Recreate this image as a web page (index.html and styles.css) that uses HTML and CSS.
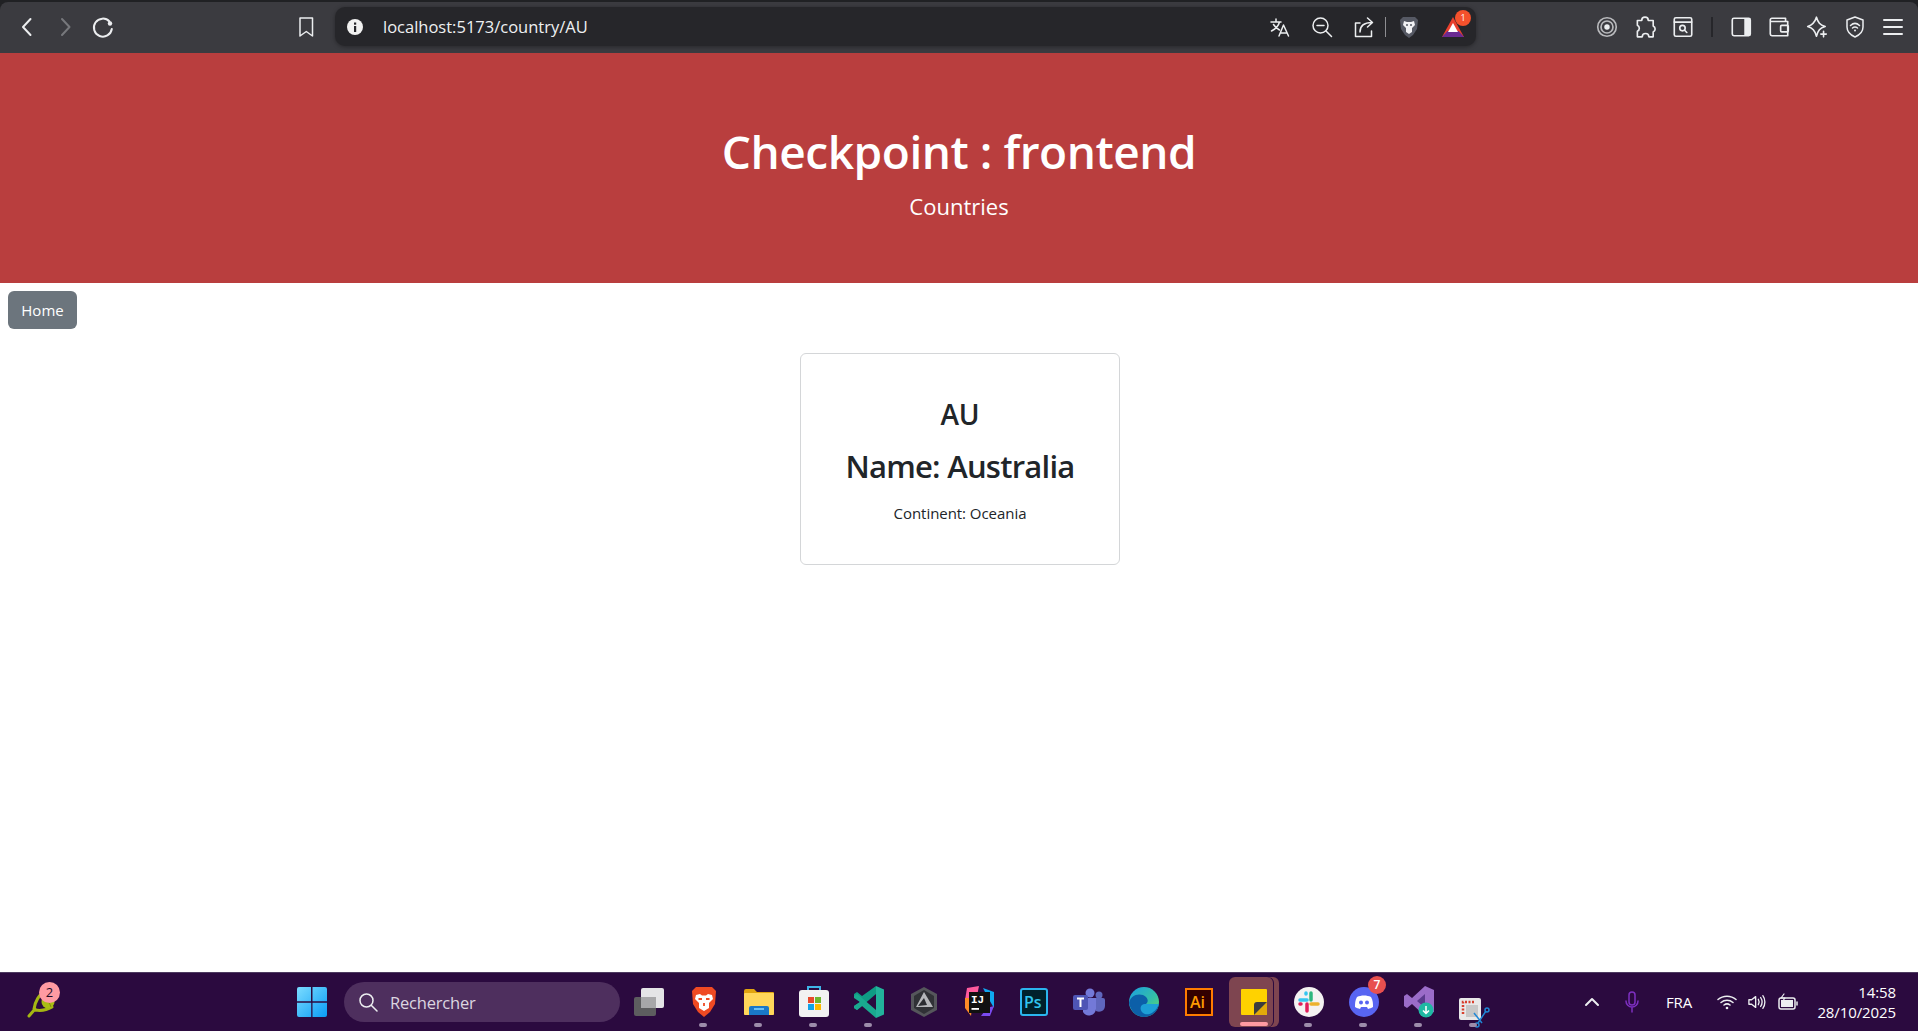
FILE: index.html
```html
<!DOCTYPE html>
<html lang="fr">
<head>
<meta charset="utf-8">
<title>Checkpoint : frontend</title>
<link rel="stylesheet" href="styles.css">
</head>
<body>
<div class="chrome">
  <div class="toolbar">
    <span class="tool"><svg width="24" height="24" viewBox="0 0 24 24" class="line"><path d="M15.500 4 8 12l7.500 8"/></svg></span>
    <span class="tool"><svg width="24" height="24" viewBox="0 0 24 24" class="line dim"><path d="M9 4l7.500 8L9 20"/></svg></span>
    <span class="tool"><svg width="24" height="24" viewBox="0 0 24 24" class="line"><path d="M18.500 6.500A9 9 0 1 0 20.800 14"/><circle cx="19" cy="8.500" r="2.200" class="fill"/></svg></span>
    <span class="tool bookmark"><svg width="20" height="24" viewBox="0 0 20 24" class="line thin"><path d="M4 3h12.500v18l-6.200-4.500L4 21z"/></svg></span>
    <div class="urlbar">
      <svg class="info" width="18" height="18" viewBox="0 0 18 18"><circle cx="9" cy="9" r="8" fill="#f1f1f1"/><rect x="8" y="8" width="2.200" height="6" fill="#26262a"/><rect x="8" y="4.500" width="2.200" height="2.200" fill="#26262a"/></svg>
      <span class="url">localhost:5173/country/AU</span>
      <div class="url-tools">
        <span class="url-tool"><svg width="22" height="22" viewBox="0 0 22 22" class="line thin"><path d="M2 6h10M7 3v3M10.500 6c-1 4-4 7-8 9M4.500 8.500c1.500 2.500 3 4 6 5.500M10 20l4.500-11L19.500 20M11.500 17h6.500"/></svg></span>
        <span class="url-tool"><svg width="22" height="22" viewBox="0 0 22 22" class="line thin"><circle cx="9.500" cy="9.500" r="7.500"/><path d="M6 9.500h7M15 15l5.500 5.500"/></svg></span>
        <span class="url-tool"><svg width="22" height="22" viewBox="0 0 22 22" class="line thin"><path d="M7 7H2.500v13.500h16V15M7 16c0-6 4-9.500 12-9.500M14.500 2l5 4.500-5 4.500"/></svg></span>
        <span class="url-divider"></span>
        <span class="url-tool brave-tool"><svg width="20" height="24" viewBox="0 0 20 24"><path d="M4 2h12l3 3-1 9-4 6-4 3-4-3-4-6-1-9z" fill="#565964"/><path d="M5 6l3 1h4l3-1 1 4-3 3v4l-3 2-3-2v-4l-3-3z" fill="#f1f1f4"/><path d="M7 10h2M11 10h2" stroke="#565964" stroke-width="1.500"/></svg></span>
        <span class="url-tool bat-tool"><svg width="24" height="22" viewBox="0 0 24 22"><polygon points="12,1 23,21 1,21" fill="#e8402d"/><polygon points="1,21 23,21 17.500,15 6.500,15" fill="#6a2a92"/><polygon points="12,7 17,16 7,16" fill="#fff"/></svg><span class="bat-badge">1</span></span>
      </div>
    </div>
    <div class="browser-tools">
      <span class="tool"><svg width="24" height="24" viewBox="0 0 22 22" class="line thin soft"><circle cx="11" cy="11" r="8.500"/><circle cx="11" cy="11" r="5.500"/><circle cx="11" cy="11" r="2.500" class="fill"/></svg></span>
      <span class="tool"><svg width="24" height="24" viewBox="0 0 22 22" class="line thin"><path d="M8 5a3 3 0 0 1 6 0h4.500v5a3 3 0 0 1 0 5.500V20h-4a3 3 0 0 0-6 0H4v-5a3 3 0 0 0 0-5.500V5z"/></svg></span>
      <span class="tool"><svg width="24" height="24" viewBox="0 0 22 22" class="line thin"><rect x="3" y="2.500" width="16" height="17" rx="1.500"/><path d="M3 6.500h16"/><circle cx="10.500" cy="12" r="2.500"/><path d="M12.500 14l2 2"/></svg></span>
      <span class="tool-divider"></span>
      <span class="tool"><svg width="24" height="24" viewBox="0 0 22 22" class="line thin"><rect x="3" y="3" width="16.500" height="16" rx="1.500"/><rect x="14" y="3" width="5.500" height="16" class="fill"/></svg></span>
      <span class="tool"><svg width="24" height="24" viewBox="0 0 22 22" class="line thin"><path d="M17 6V3H4.500A1.500 1.500 0 0 0 3 4.500v13A1.500 1.500 0 0 0 4.500 19H19V6H4"/><rect x="12.500" y="9.500" width="7" height="6" rx="1"/></svg></span>
      <span class="tool"><svg width="24" height="24" viewBox="0 0 22 22" class="line thin"><path d="M10.500 2c1.500 5 3 7 8 8.500-5 1.500-6.500 3.500-8 9-1.500-5.500-3.500-7.500-8-9 4.500-1.500 6.500-3.500 8-8.500z"/><path d="M17 15v5M14.500 17.500h5"/></svg></span>
      <span class="tool"><svg width="22" height="24" viewBox="0 0 22 24" class="line thin"><path d="M11 2l8 3v7c0 5-3.500 8-8 10-4.500-2-8-5-8-10V5z"/><path d="M6.500 10.500c2.800-2.600 6.200-2.600 9 0M8.500 13c1.600-1.300 3.400-1.300 5 0"/><circle cx="11" cy="15.500" r="1" class="fill"/></svg></span>
      <span class="tool"><svg width="22" height="22" viewBox="0 0 22 22" class="line"><path d="M2 4h18M2 11h18M2 18h18"/></svg></span>
    </div>
  </div>
</div>

<main class="page">
  <header class="hero">
    <h1 class="hero-title">Checkpoint : frontend</h1>
    <p class="hero-sub">Countries</p>
  </header>
  <nav class="page-nav"><a class="btn-home" href="#">Home</a></nav>
  <section class="card">
    <h5 class="card-code">AU</h5>
    <h3 class="card-name">Name: Australia</h3>
    <p class="card-continent">Continent: Oceania</p>
  </section>
</main>

<footer class="taskbar">
  <span class="widget">
    <svg width="34" height="38" viewBox="0 0 34 38"><path d="M19 9c-6 2-10 10-11 17M26 24c-5 3-11 4-17 3M3 33l6-7" fill="none" stroke="#a5b712" stroke-width="3" stroke-linecap="round"/><circle cx="22" cy="19" r="6.500" fill="#a9bd14"/><path d="M18 15c3 2 6 5 7 9" stroke="#7f8f0c" stroke-width="1" fill="none"/></svg>
    <span class="widget-badge">2</span>
  </span>
  <span class="start"><svg width="30" height="30" viewBox="0 0 30 30"><defs><linearGradient id="win" x1="0" y1="0" x2="1" y2="1"><stop offset="0" stop-color="#7bdcff"/><stop offset="1" stop-color="#0a9cf5"/></linearGradient></defs><path d="M0 2a2 2 0 0 1 2-2h12v14.200H0zM15.500 0H28a2 2 0 0 1 2 2v12.200H15.500zM0 15.700h14.200V30H2a2 2 0 0 1-2-2zM15.500 15.700H30V28a2 2 0 0 1-2 2H15.500z" fill="url(#win)"/></svg></span>
  <div class="search">
    <svg width="20" height="20" viewBox="0 0 20 20" class="line thin"><circle cx="8.500" cy="8.500" r="6.500"/><path d="M13.500 13.500L19 19"/></svg>
    <span>Rechercher</span>
  </div>
  <div class="apps">
    <span class="app"><svg width="32" height="30" viewBox="0 0 32 30"><rect x="1" y="10" width="22" height="19" rx="2" fill="#5d5d5f"/><rect x="8" y="1" width="23" height="20" rx="2" fill="#e4e4e6"/><rect x="8" y="10" width="15" height="11" fill="#a7a7a9"/></svg></span>
    <span class="app on"><svg width="26" height="32" viewBox="0 0 26 32"><path d="M5 1h16l4 4-1 13-5 8-6 5-6-5-5-8L1 5z" fill="#ef4a23"/><path d="M5 9l4-1 2 1.500h4L17 8l4 1 1 4-4 4v5l-5 3-5-3v-5l-4-4z" fill="#fff"/><path d="M7.500 13h3.500M15 13h3.500M13 17v3" stroke="#ef4a23" stroke-width="1.800"/></svg></span>
    <span class="app on"><svg width="32" height="28" viewBox="0 0 32 28"><path d="M1 3a2 2 0 0 1 2-2h8l3 3h16a1 1 0 0 1 1 1v20a2 2 0 0 1-2 2H3a2 2 0 0 1-2-2z" fill="#e0a40f"/><rect x="1" y="5" width="30" height="22" rx="1" fill="#ffd65a"/><path d="M6 27v-7a2 2 0 0 1 2-2h16a2 2 0 0 1 2 2v7z" fill="#1a78c8"/><rect x="11" y="20" width="10" height="2" fill="#6bc0f5"/></svg></span>
    <span class="app on"><svg width="30" height="32" viewBox="0 0 30 32"><path d="M8 0h14v4h-2V2H10v2H8z" fill="#3fb5e8"/><rect y="4" width="30" height="27" rx="3" fill="#f2f2f2"/><rect x="9" y="11" width="6" height="6" fill="#e8492c"/><rect x="16" y="11" width="6" height="6" fill="#6fb52e"/><rect x="9" y="18" width="6" height="6" fill="#12a3e8"/><rect x="16" y="18" width="6" height="6" fill="#fdb900"/></svg></span>
    <span class="app on"><svg width="32" height="32" viewBox="0 0 32 32"><path d="M23 0l8 3.500v25L23 32z" fill="#22b39b"/><path d="M23 0v8L9 20l-5 4-3-2v-2l6-4-6-6V8l3-2 5 4z" fill="#0f9c84"/><path d="M23 32v-8L9 12 4 8 1 10v2l6 4-6 4v2l3 2 5-4z" fill="#1aa98f"/></svg></span>
    <span class="app"><svg width="28" height="30" viewBox="0 0 28 30"><polygon points="14,0 27,7 27,23 14,30 1,23 1,7" fill="#55565b"/><polygon points="14,3 24,9 24,21 14,27 4,21 4,9" fill="#303136"/><polygon points="14,5 23,20 6,20" fill="#b5b6ba"/><polygon points="14,11 17,18 8,19" fill="#2b2c31"/></svg></span>
    <span class="app"><svg width="32" height="32" viewBox="0 0 32 32"><polygon points="4,2 16,0 14,10 2,14" fill="#ff5a9d"/><polygon points="20,2 31,6 31,22 24,10" fill="#10a8f0"/><polygon points="2,12 10,12 8,30 2,22" fill="#fd8b26"/><polygon points="24,22 31,20 27,30 18,30" fill="#7a4bf0"/><rect x="6" y="6" width="21" height="21" fill="#111"/><text x="8" y="17" class="ij">IJ</text><rect x="8.500" y="22" width="7.500" height="1.800" fill="#fff"/></svg></span>
    <span class="app"><svg width="28" height="28" viewBox="0 0 28 28"><rect x="1" y="1" width="26" height="26" rx="2" fill="#00212c" stroke="#2bb5ee" stroke-width="2"/><text x="4" y="20" class="ps">Ps</text></svg></span>
    <span class="app"><svg width="32" height="28" viewBox="0 0 32 28"><circle cx="17" cy="5" r="4.500" fill="#7379d8"/><circle cx="26" cy="7" r="3.500" fill="#5f66bd"/><path d="M21 10h9a2 2 0 0 1 2 2v6a6 6 0 0 1-9 5z" fill="#5f66bd"/><path d="M10 10h13v11a7 7 0 0 1-13 3z" fill="#7379d8"/><rect y="7" width="15" height="15" rx="2" fill="#4e55b5"/><path d="M4 10.500h7M7.500 10.500V19" stroke="#fff" stroke-width="2"/></svg></span>
    <span class="app"><svg width="32" height="32" viewBox="0 0 32 32"><defs><linearGradient id="edge" x1="0" y1="0" x2="1" y2="1"><stop offset="0" stop-color="#1b9de2"/><stop offset=".6" stop-color="#35c1a4"/><stop offset="1" stop-color="#6fdc5f"/></linearGradient></defs><circle cx="16" cy="16" r="15" fill="url(#edge)"/><path d="M1 17C2 10 9 7 15 9c5 2 6 7 3 9h13c-1 8-8 13-15 13-7 0-13-5-15-14z" fill="#0c5fa8"/><path d="M31 18H17c-5 0-6 6-2 9 4 3 12 1 16-9z" fill="#1d9fd6"/></svg></span>
    <span class="app"><svg width="28" height="28" viewBox="0 0 28 28"><rect x="1" y="1" width="26" height="26" fill="#330000" stroke="#ff7c00" stroke-width="2"/><text x="5" y="20" class="ai">Ai</text></svg></span>
    <span class="app active"><svg width="26" height="26" viewBox="0 0 26 26"><rect width="26" height="26" rx="1" fill="#ffd200"/><path d="M26 13L13 26h11a2 2 0 0 0 2-2z" fill="#e2a90a"/><path d="M26 13H16a3 3 0 0 0-3 3v10z" fill="#3c3c3e"/></svg></span>
    <span class="app on"><svg width="30" height="30" viewBox="0 0 30 30"><circle cx="15" cy="15" r="15" fill="#f4f2f2"/><path d="M6 13h7M12 6v1" stroke="#36c5f0" stroke-width="3.500" stroke-linecap="round"/><path d="M17 6v7M17 13h0" stroke="#2eb67d" stroke-width="3.500" stroke-linecap="round"/><path d="M17 17h7" stroke="#ecb22e" stroke-width="3.500" stroke-linecap="round"/><path d="M13 17v7M6 17h1" stroke="#e01e5a" stroke-width="3.500" stroke-linecap="round"/></svg></span>
    <span class="app on"><svg width="30" height="30" viewBox="0 0 30 30"><circle cx="15" cy="15" r="15" fill="#5865f2"/><path d="M8 10c4-2 10-2 14 0 2 3 2 7 2 10-2 1-3 1.500-5 2l-1-2h-6l-1 2c-2-.5-3-1-5-2 0-3 0-7 2-10z" fill="#fff"/><circle cx="12" cy="15.500" r="2" fill="#5865f2"/><circle cx="18" cy="15.500" r="2" fill="#5865f2"/></svg><span class="discord-badge">7</span></span>
    <span class="app on"><svg width="30" height="32" viewBox="0 0 30 32"><path d="M21 0l9 4v22l-9 4L8 18l-5 4-3-2V10l3-2 5 4z" fill="#9b6cc9"/><path d="M21 8v14l-8-7z" fill="#5b3a8e"/><circle cx="22" cy="24" r="7.500" fill="#1fb8a3"/><path d="M22 20v7M19 24.500l3 3 3-3" stroke="#fff" stroke-width="1.500" fill="none"/></svg></span>
    <span class="app on snip"><svg width="32" height="32" viewBox="0 0 32 32"><rect x="1" y="1" width="22" height="22" rx="2" fill="#e8e8e8"/><path d="M5 17V5h12" stroke="#d8402e" stroke-width="2.500" stroke-dasharray="2 1.500" fill="none"/><rect x="8" y="8" width="12" height="12" fill="#c7c7c7"/><path d="M16 16l8 10M28 14l-8 12" stroke="#1f88d6" stroke-width="1.500"/><circle cx="29" cy="13" r="2" fill="none" stroke="#1f88d6" stroke-width="1.500"/><circle cx="19" cy="28" r="2" fill="none" stroke="#1f88d6" stroke-width="1.500"/></svg></span>
  </div>
  <div class="tray">
    <span class="tray-item chevron"><svg width="16" height="10" viewBox="0 0 16 10" class="line"><path d="M2 8l6-6 6 6"/></svg></span>
    <span class="tray-item mic"><svg width="14" height="22" viewBox="0 0 14 22" class="line thin mic-line"><rect x="4" y="1" width="6" height="13" rx="3"/><path d="M1 10a6 6 0 0 0 12 0M7 16v5"/></svg></span>
    <span class="tray-item lang">FRA</span>
    <span class="tray-item wifi"><svg width="20" height="16" viewBox="0 0 20 16" class="line thin"><path d="M1 5.500c5-4.500 13-4.500 18 0M4 8.500c3.500-3 8.500-3 12 0M7 11c2-1.500 4-1.500 6 0"/><circle cx="10" cy="14" r="1.300" class="fill"/></svg></span>
    <span class="tray-item vol"><svg width="20" height="16" viewBox="0 0 20 16" class="line thin"><path d="M1 5.500h3L8.500 2v12L4 10.500H1zM11.500 5c1.200 2 1.200 4 0 6M14 3c2 3 2 7 0 10M16.500 1c3 4 3 10 0 14"/></svg></span>
    <span class="tray-item bat"><svg width="22" height="18" viewBox="0 0 22 18" class="line thin"><rect x="2" y="5" width="16" height="11" rx="2"/><rect x="4" y="7" width="12" height="7" class="fill"/><path d="M20 9v3"/><path d="M7 1L4 5h4L5 9" class="bolt"/></svg></span>
    <div class="clock"><span>14:58</span><span>28/10/2025</span></div>
  </div>
</footer>
</body>
</html>
```

FILE: styles.css
```css
* { box-sizing: border-box; }
html, body { margin: 0; height: 100%; }
body {
  display: flex;
  flex-direction: column;
  height: 100vh;
  overflow: hidden;
  font-family: "Open Sans", "Noto Sans", "Liberation Sans", sans-serif;
  background: #fff;
  color: #212529;
}
.line { fill: none; stroke: #eceef0; stroke-width: 2; stroke-linecap: round; stroke-linejoin: round; }
.line.thin { stroke-width: 1.500; }
.line.dim { stroke: #77787c; }
.line.soft { stroke: #b9babd; }
.line .fill { fill: #eceef0; stroke: none; }

/* Browser chrome */
.chrome { height: 53px; flex: none; background: #202124; padding-top: 2px; }
.toolbar {
  height: 51px;
  display: flex;
  align-items: center;
  padding: 0 6px 2px 8px;
  background: #3b3b40;
  border-radius: 8px 8px 0 0;
}
.tool { width: 38px; height: 38px; flex: none; display: flex; align-items: center; justify-content: center; }
.bookmark { margin-left: 165px; }
.urlbar {
  margin-left: 10px;
  width: 1141px;
  height: 39px;
  flex: none;
  display: flex;
  align-items: center;
  padding-left: 11px;
  background: #26262a;
  border-radius: 10px;
  box-shadow: 0 1px 4px rgba(0,0,0,.35);
}
.info { flex: none; }
.url { margin-left: 19px; font-size: 16.500px; color: #eef0f2; margin-bottom: 1px; }
.url-tools { margin-left: auto; display: flex; align-items: center; padding-right: 2px; }
.url-tool { width: 42px; height: 30px; position: relative; display: flex; align-items: center; justify-content: center; }
.url-divider { width: 1px; height: 20px; background: #8e8e92; }
.brave-tool { width: 46px; }
.bat-tool { width: 42px; }
.bat-badge {
  position: absolute;
  top: -2px;
  right: 3px;
  width: 16px;
  height: 16px;
  border-radius: 50%;
  background: #f4512c;
  color: #fff;
  font-size: 9px;
  line-height: 16px;
  text-align: center;
}
.browser-tools { margin-left: auto; display: flex; align-items: center; }
.tool-divider { width: 2px; height: 20px; background: #26262a; margin-left: 9px; }
.tool-divider + .tool { margin-left: 9px; }

/* Page */
.page { flex: 1; min-height: 0; }
.hero {
  height: 230px;
  display: flex;
  flex-direction: column;
  align-items: center;
  padding-top: 70px;
  background: #b93e3e;
  color: #fff;
}
.hero-title { margin: 0; font-size: 46px; line-height: 56px; font-weight: 600; letter-spacing: -.45px; }
.hero-sub { margin: 11px 0 0; font-size: 22px; line-height: 33px; }
.page-nav { padding: 8px; display: flex; }
.btn-home {
  display: block;
  padding: 7px 13px;
  width: 69px;
  height: 38px;
  background: #6c757d;
  border-radius: 6px;
  color: #fff;
  font-size: 15px;
  line-height: 24px;
  text-align: center;
  text-decoration: none;
}
.card {
  width: 320px;
  height: 212px;
  margin: 16px 0 0 calc(50% - 159px);
  padding: 41px 16px 0;
  border: 1px solid #d4d6d8;
  border-radius: 6px;
  text-align: center;
}
.card-code { margin: 0; font-size: 28px; line-height: 38px; font-weight: 600; letter-spacing: -.2px; }
.card-name { margin: 12px 0 0; font-size: 31px; line-height: 42px; font-weight: 600; letter-spacing: -.75px; white-space: nowrap; }
.card-continent { margin: 15px 0 0; font-size: 15px; line-height: 22px; letter-spacing: -.05px; }

/* Taskbar */
.taskbar {
  height: 59px;
  flex: none;
  display: flex;
  align-items: center;
  background: #2b0a3f;
  border-top: 1px solid #4d3a60;
}
.widget { position: relative; width: 86px; height: 40px; display: flex; align-items: center; justify-content: center; }
.widget-badge {
  position: absolute;
  top: 0;
  left: 39px;
  width: 21px;
  height: 21px;
  border-radius: 50%;
  background: #ff9aa2;
  color: #1d0d28;
  font-size: 13px;
  line-height: 21px;
  text-align: center;
}
.start { margin-left: 198px; width: 56px; display: flex; justify-content: center; }
.search {
  margin-left: 4px;
  width: 276px;
  height: 40px;
  display: flex;
  align-items: center;
  gap: 12px;
  padding-left: 14px;
  background: #4e2f5e;
  border-radius: 20px;
  color: #dcd6e0;
  font-size: 16.500px;
  letter-spacing: -.2px;
}
.apps { display: flex; margin-left: 1px; }
.app { position: relative; width: 55px; height: 50px; display: flex; align-items: center; justify-content: center; }
.app svg { position: relative; }
.app.on::after {
  content: "";
  position: absolute;
  left: 23px;
  bottom: 0;
  width: 8px;
  height: 4px;
  border-radius: 2px;
  background: #9d8cab;
}
.snip { padding-top: 22px; }
.app.active::before {
  content: "";
  position: absolute;
  left: 3px;
  top: 0;
  width: 44px;
  height: 50px;
  background: #7e4550;
  border-radius: 6px;
  box-shadow: 1px 0 0 #2b0a3f, 6px 0 0 #7e4550;
}
.app.active::after {
  content: "";
  position: absolute;
  left: 14px;
  bottom: 1px;
  width: 28px;
  height: 4px;
  border-radius: 2px;
  background: #ff9aa2;
}
.discord-badge {
  position: absolute;
  top: -1px;
  right: 5px;
  width: 18px;
  height: 18px;
  border-radius: 50%;
  background: #e8504f;
  color: #fff;
  font-size: 12px;
  font-weight: 600;
  line-height: 18px;
  text-align: center;
}
.ij { font-family: "Liberation Mono", monospace; font-size: 11px; font-weight: 700; fill: #fff; }
.ps { font-family: "Open Sans", sans-serif; font-size: 16px; font-weight: 600; fill: #31c5f0; }
.ai { font-family: "Open Sans", sans-serif; font-size: 16px; font-weight: 600; fill: #ff9a00; }
.tray { margin-left: auto; display: flex; align-items: center; padding-right: 22px; color: #fff; }
.tray-item { display: flex; align-items: center; justify-content: center; flex: none; }
.chevron, .mic { width: 40px; }
.mic-line { stroke: #7d2fc0; }
.lang { width: 54px; font-size: 15px; letter-spacing: -.1px; }
.wifi { width: 42px; }
.vol { width: 18px; }
.bat { width: 44px; }
.bolt { stroke-width: 1.200; }
.clock {
  width: 86px;
  display: flex;
  flex-direction: column;
  align-items: flex-end;
  font-size: 15px;
  line-height: 20px;
  letter-spacing: -.1px;
}
```
